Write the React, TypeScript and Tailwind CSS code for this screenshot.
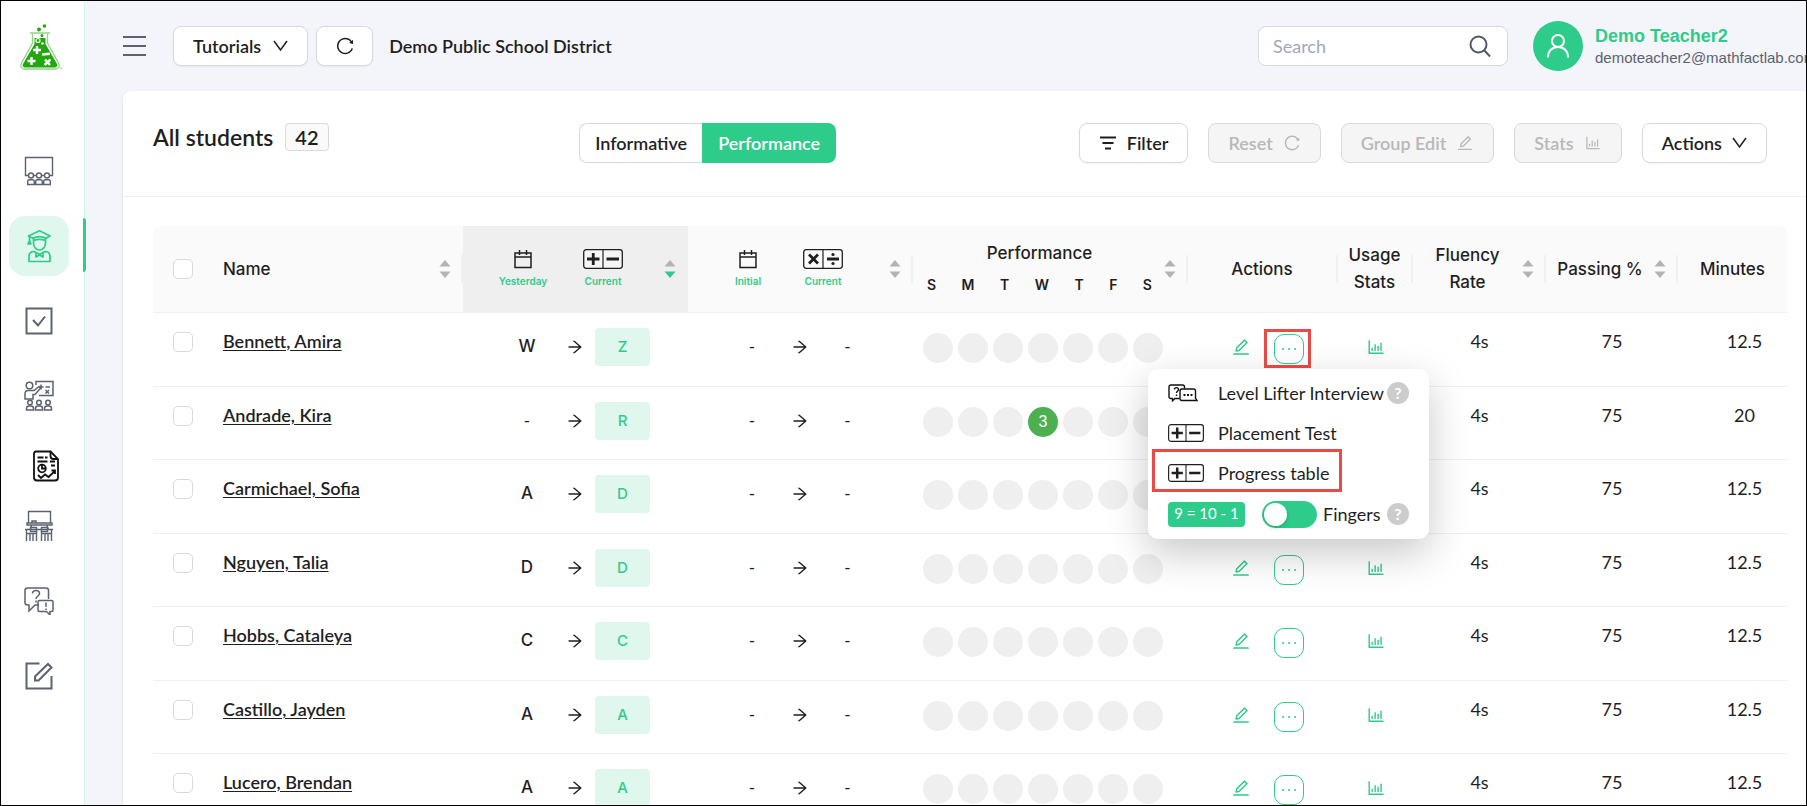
import React from 'react'
import { AiOutlineArrowRight, AiOutlineBarChart, AiOutlineEdit, AiOutlineReload } from 'react-icons/ai'

type Student = {
  name: string
  yesterday: string
  current: string
  minutes: string
  played?: { day: number; count: number }
  menuOpen?: boolean
}

const students: Student[] = [
  { name: 'Bennett, Amira', yesterday: 'W', current: 'Z', minutes: '12.5', menuOpen: true },
  { name: 'Andrade, Kira', yesterday: '-', current: 'R', minutes: '20', played: { day: 3, count: 3 } },
  { name: 'Carmichael, Sofia', yesterday: 'A', current: 'D', minutes: '12.5' },
  { name: 'Nguyen, Talia', yesterday: 'D', current: 'D', minutes: '12.5' },
  { name: 'Hobbs, Cataleya', yesterday: 'C', current: 'C', minutes: '12.5' },
  { name: 'Castillo, Jayden', yesterday: 'A', current: 'A', minutes: '12.5' },
  { name: 'Lucero, Brendan', yesterday: 'A', current: 'A', minutes: '12.5' },
]

const days = ['S', 'M', 'T', 'W', 'T', 'F', 'S']

/* ---------- Icons ---------- */

const Logo = () => (
  <svg width="42" height="48" viewBox="0 0 42 48" fill="none">
    <circle cx="24.500" cy="3" r="1.800" fill="#22a80c" />
    <circle cx="19" cy="6.500" r="2" fill="#22a80c" />
    <path d="M10 10h20M12.500 11v9L1.500 40c-1.500 3.500 0 6 3 6h31c3 0 4.500-2.500 3-6l-11-20v-9" stroke="#8fd487" strokeWidth="1.300" />
    <path d="M14.500 15h11v6l11.500 20c1 2-.5 3.500-2.500 3.500h-29C3.500 44.500 2 43 3 41l11.500-20z" fill="#22a80c" />
    <circle cx="18" cy="17.500" r="2" stroke="#fff" strokeWidth="1.200" />
    <circle cx="22" cy="12.500" r="1.500" fill="#22a80c" />
    <circle cx="22.500" cy="20.500" r="1.200" fill="#fff" />
    <path d="M17 23v8M13 27h8M22 31.500l8-.8M11.500 34v8M7.500 38h8M25 36.500l5 5.500M30.500 36.500L24.500 42" stroke="#fff" strokeWidth="2.400" />
    <circle cx="41" cy="45" r="1" stroke="#8fd487" strokeWidth=".6" />
  </svg>
)

const ClassIcon = () => (
  <svg width="30" height="30" viewBox="0 0 30 30" fill="none" stroke="currentColor" strokeWidth="1.400">
    <path d="M5 19.500H1.500V1.500h27v18H25" />
    {[7, 15, 23].map((x) => (
      <g key={x}>
        <circle cx={x} cy="19.500" r="2.500" />
        <path d={`M${x - 3.3} 28.500v-3q0-1.800 1.800-1.800h3q1.800 0 1.800 1.800v3z`} />
      </g>
    ))}
    <path d="M10 19.500h2M18 19.500h2" />
  </svg>
)

const StudentIcon = () => (
  <svg width="26" height="34" viewBox="0 0 26 34" fill="none" stroke="currentColor" strokeWidth="1.700" strokeLinejoin="round">
    <path d="M2.500 7L13.500 1.800 24 7l-4 2.200c-4-2-9-2-13 0z" />
    <path d="M7.500 9v5c0 4.500 3 7 6 7s6-2.500 6-7V9M7.500 11.500c4-1.500 8-1.500 12 0M3.500 7.500v4M2 15l1.500-3.500L5 15z" />
    <path d="M3 32.500v-5c0-3 2-5 5-5l5.500 3 5.500-3c3 0 5 2 5 5v5z" />
    <path d="M10 24v4l3.500-2 3.500 2v-4" />
  </svg>
)

const CheckSquareIcon = () => (
  <svg width="28" height="28" viewBox="0 0 28 28" fill="none" stroke="currentColor" strokeWidth="2">
    <rect x="1.500" y="1.500" width="25" height="25" />
    <path d="M8 13l5 5.500 7-9" />
  </svg>
)

const TeachIcon = () => (
  <svg width="30" height="31" viewBox="0 0 30 31" fill="none" stroke="currentColor" strokeWidth="1.500">
    <path d="M12 5V1.500h17v14H15" />
    <circle cx="5.500" cy="5.500" r="3.300" />
    <path d="M1 19v-5c0-2 1-3.500 3-3.500h6l5-4 1.500 1.800L11 14.500H9V19zM17 4.500v5M14.500 7h5M21.500 7h4.500M21.500 10l3.500 3.500M25 10l-3.500 3.500" />
    {[6, 15, 24].map((x) => (
      <g key={x}>
        <circle cx={x} cy="22.500" r="2.300" />
        <path d={`M${x - 3.5} 30v-1.500q0-2.500 2.500-2.500h2q2.500 0 2.500 2.500V30z`} />
      </g>
    ))}
  </svg>
)

const ReportIcon = () => (
  <svg width="28" height="32" viewBox="0 0 28 32" fill="none" stroke="#111" strokeWidth="1.800">
    <path d="M4 1.500h14.500L26 9v18.500q0 3-3 3H5q-3 0-3-3V4q0-2.500 2-2.500z" />
    <path d="M18.500 1.500V6q0 3 3 3H26" />
    <path d="M5.500 7.500h6M13 7.500h2.500M5.500 11.500h10M18 11.500h5M19 15.500h4" />
    <circle cx="10" cy="18.500" r="3.800" />
    <path d="M10 14.500v4h4M6 25l3 3 4-3.500 3.500 2.500 6.500-6M19.500 20.500H23V24" />
  </svg>
)

const ClassroomIcon = () => (
  <svg width="30" height="31" viewBox="0 0 30 31" fill="none" stroke="currentColor" strokeWidth="1.400">
    <path d="M4.500 13V1.500h22V13M3 13h25v2H3zM8 12.500v-1.500h4v1.500M7.500 15.500L6 20M23 15.500l1.500 4.500" />
    <path d="M1 19.500h28M2.500 19.500V31M12.500 21v10M17.500 21v10M27.500 19.500V31M6 24v7M9 24v7M21 24v7M24 24v7M3 23.500h9M18 23.500h9" />
    <path d="M6.500 17.500h6v4h-6zM17.500 17.500h6v4h-6z" />
  </svg>
)

const HelpChatIcon = () => (
  <svg width="30" height="28" viewBox="0 0 30 28" fill="none" stroke="currentColor" strokeWidth="1.500">
    <path d="M15 18h-4l-6 6v-6H3.500Q1 18 1 15.500v-12Q1 1 3.500 1H22q2.500 0 2.500 2.500V12" />
    <path d="M15.500 13.500h12q1.500 0 1.500 1.500v8q0 1.500-1.500 1.500h-1.500V28l-3.500-3.500h-7q-1.500 0-1.500-1.500v-8q0-1.500 1.500-1.500z" />
    <path d="M8.500 6.500c0-4 7-4 7 0 0 2.500-3.500 2.500-3.500 5.500M12 13.500v2M22 15.500v4.500M22 21.500v1.500" />
  </svg>
)

const ComposeIcon = () => (
  <svg width="28" height="28" viewBox="0 0 28 28" fill="none" stroke="currentColor" strokeWidth="2">
    <path d="M14.500 1.500h-13v25h25V14" />
    <path d="M10 18.500v-4L23 2l3.500 3.500-13 13z" />
  </svg>
)

const ChevronIcon = () => (
  <svg width="15" height="12" viewBox="0 0 15 12" fill="none" stroke="currentColor" strokeWidth="1.500">
    <path d="M1 1l6.500 9L14 1" />
  </svg>
)

const CalendarIcon = () => (
  <svg width="18" height="20" viewBox="0 0 18 20" fill="none" stroke="currentColor" strokeWidth="1.500">
    <path d="M1 4h16v14.500H1zM1 8h16M5.500 1v5M12.500 1v5" />
  </svg>
)

const CardIcon = ({ kind, small }: { kind: 'add' | 'multiply'; small?: boolean }) => (
  <svg width={small ? 36 : 40} height={small ? 18 : 20} viewBox="0 0 40 20" fill="none" stroke="#1f1f1f">
    <rect x="0.700" y="0.700" width="38.600" height="18.600" rx="2.500" strokeWidth="1.300" fill="#fff" fillOpacity=".4" />
    <path d="M20 1v18" strokeWidth="1.200" />
    {kind === 'add' ? (
      <path d="M4 10h12.500M10.250 4v12M23.500 10H36" strokeWidth="2.800" />
    ) : (
      <>
        <path d="M6 5.500l9 9M15 5.500l-9 9M24 10h12" strokeWidth="2.800" />
        <circle cx="30" cy="5.500" r="1.600" fill="#1f1f1f" stroke="none" />
        <circle cx="30" cy="14.500" r="1.600" fill="#1f1f1f" stroke="none" />
      </>
    )}
  </svg>
)

const InterviewIcon = () => (
  <svg width="30" height="18" viewBox="0 0 30 18" fill="none" stroke="#111" strokeWidth="1.400">
    <path d="M11.500 14.500H7L4.500 16.800V14.500H3q-2 0-2-2V3q0-2 2-2h11.500q2 0 2 2v1.500" />
    <path d="M14 5h11.500q2 0 2 2v7l1.500 2.500H14q-2 0-2-2V7q0-2 2-2z" />
    <path d="M6.500 5.500c0-2.500 4-2.500 4 0 0 1.500-2 1.500-2 3.500M8.500 10.500v1.500" />
    <path d="M15.500 11h2M19 11h2M22.500 11h2" strokeWidth="2" />
  </svg>
)

/* ---------- Small parts ---------- */

const Sorter = ({ active }: { active?: boolean }) => (
  <svg className="mr-2.5 shrink-0" width="12" height="18" viewBox="0 0 12 18" fill="#b3b3b3">
    <path d="M6 0l5.500 6.500H.5z" />
    <path d="M6 18L.5 11.500h11z" fill={active ? '#2ecc8a' : '#b3b3b3'} />
  </svg>
)

const Th = ({ children, sort, active, last, className = '' }: {
  children?: React.ReactNode
  sort?: boolean
  active?: boolean
  last?: boolean
  className?: string
}) => (
  <th className={`h-[87px] border-b border-[#f0f0f0] p-0 font-medium ${className}`}>
    <div className="flex items-center">
      <div className="flex-1">{children}</div>
      {sort && <Sorter active={active} />}
      {!last && <span className={`h-7 w-0.5 ${active ? '' : 'bg-[#f0f0f0]'}`} />}
    </div>
  </th>
)

const LevelHead = ({ from, kind }: { from: string; kind: 'add' | 'multiply' }) => (
  <div className="flex pl-5 text-[10px] leading-4 font-semibold text-[#2ecc8a]">
    <div className="flex w-20 flex-col items-center gap-1">
      <span className="text-[#1f1f1f]"><CalendarIcon /></span>
      {from}
    </div>
    <div className={`flex flex-col items-center gap-1 ${kind === 'add' ? 'w-20' : 'w-[70px]'}`}>
      <CardIcon kind={kind} />
      Current
    </div>
  </div>
)

const LevelCell = ({ from, children }: { from: string; children: React.ReactNode }) => (
  <div className="flex h-[38px] items-center pl-[34px] font-['Inter',sans-serif]">
    <span className={`w-[60px] text-center text-[17px] ${from === '-' ? "font-['Lato',sans-serif]" : 'font-medium'}`}>{from}</span>
    <AiOutlineArrowRight className="mr-[11px] ml-[9px] size-[18px]" />
    {children}
  </div>
)

const helpDot = 'flex size-[22px] items-center justify-center rounded-full bg-[#ccc] text-base font-bold text-white'
const tick = 'block size-5 appearance-none rounded-[5px] border border-[#d9d9d9] bg-white'
const toolButton = 'flex h-10 items-center gap-2.5 rounded-lg border border-[#d9d9d9] px-[19px] text-lg font-semibold'

const ActionMenu = () => (
  <div className="absolute top-[35px] -left-[126px] z-10 flex h-[170px] w-[281px] flex-col rounded-[10px] bg-white px-5 pt-1 text-lg shadow-[0_14px_40px_rgba(0,0,0,0.22)]">
    <button className="flex h-10 items-center text-left">
      <span className="w-[50px]"><InterviewIcon /></span>
      <span className="flex-1 whitespace-nowrap">Level Lifter Interview</span>
      <span className={helpDot}>?</span>
    </button>
    <button className="flex h-10 items-center text-left">
      <span className="w-[50px]"><CardIcon kind="add" small /></span>
      Placement Test
    </button>
    <button className="relative flex h-10 items-center text-left">
      <span className="w-[50px]"><CardIcon kind="add" small /></span>
      Progress table
      <span className="absolute -top-1 -left-4 h-[43px] w-[190px] border-3 border-[#e94b46]" />
    </button>
    <div className="flex h-[42px] items-center">
      <span className="flex h-[25px] w-[77px] items-center justify-center rounded bg-[#2ecc8a] text-[15px] text-white">9 = 10 - 1</span>
      <label className="flex flex-1 items-center gap-1.5 pl-[17px]">
        <input
          type="checkbox"
          role="switch"
          className="h-[27px] w-[55px] appearance-none rounded-full bg-[#2ecc8a] p-0.5 before:block before:size-[23px] before:rounded-full before:bg-white before:shadow-[0_2px_4px_rgba(0,35,11,0.2)]"
        />
        Fingers
      </label>
      <button aria-label="Help" className={helpDot}>?</button>
    </div>
  </div>
)

const StudentRow = ({ student, index }: { student: Student; index: number }) => (
  <tr className="odd:h-[74px] even:h-[73px] *:border-b *:border-[#f0f0f0] *:p-0 *:align-top">
    <td>
      <div className="pt-[19px] pl-5">
        <input type="checkbox" aria-label={student.name} className={tick} />
      </div>
    </td>
    <td>
      <div className="pt-4 pl-2.5 text-lg leading-6 font-semibold">
        <a href={`#student-${index}`} className="underline underline-offset-2">{student.name}</a>
      </div>
    </td>
    <td>
      <div className="pt-[15px]">
        <LevelCell from={student.yesterday}>
          <span className="flex h-[38px] w-[55px] items-center justify-center rounded bg-[#dff7ec] text-[15px] font-medium text-[#2ecc8a]">
            {student.current}
          </span>
        </LevelCell>
      </div>
    </td>
    <td>
      <div className="pt-[15px]">
        <LevelCell from="-">
          <span className="w-[55px] text-center font-['Lato',sans-serif] text-[17px]">-</span>
        </LevelCell>
      </div>
    </td>
    <td>
      <div className="flex gap-[5px] pt-5 pl-2.5">
        {days.map((_, day) =>
          student.played?.day === day ? (
            <span key={day} className="flex size-[30px] items-center justify-center rounded-full bg-[#4caf50] font-['Liberation_Sans',sans-serif] text-base text-white">
              {student.played.count}
            </span>
          ) : (
            <span key={day} className="size-[30px] rounded-full bg-[#efefef]" />
          ),
        )}
      </div>
    </td>
    <td>
      <div className="flex items-center gap-[23px] pt-[21px] pl-[43px] text-[#2ecc8a]">
        <button aria-label="Edit" className="pb-1"><AiOutlineEdit className="size-5" /></button>
        <div className="relative">
          <button aria-label="More actions" className="flex size-[30px] items-center justify-center gap-1 rounded-[10px] border border-[#2ecc8a]">
            <span className="size-0.5 rounded-full bg-[#2ecc8a]" />
            <span className="size-0.5 rounded-full bg-[#2ecc8a]" />
            <span className="size-0.5 rounded-full bg-[#2ecc8a]" />
          </button>
          {student.menuOpen && (
            <div className="text-[#1f1f1f]">
              <span className="absolute -top-[5px] -right-[7px] -bottom-1 -left-2.5 border-3 border-[#e94b46]" />
              <ActionMenu />
            </div>
          )}
        </div>
      </div>
    </td>
    <td>
      <div className="flex justify-center pt-6 text-[#2ecc8a]">
        <button aria-label="Usage stats"><AiOutlineBarChart className="size-5" /></button>
      </div>
    </td>
    <td><div className="pt-4 text-center text-lg leading-6">4s</div></td>
    <td><div className="pt-4 text-center text-lg leading-6">75</div></td>
    <td><div className="pt-4 pl-6 text-center text-lg leading-6">{student.minutes}</div></td>
  </tr>
)

const Sidebar = () => {
  const item = 'flex h-[75px] w-[60px] items-center justify-center'
  return (
    <aside className="w-[84px] shrink-0 border-r border-[#d5f5e8] bg-white text-[#5b6270]">
      <div className="flex h-[132px] justify-center pt-[22px] pr-1">
        <Logo />
      </div>
      <nav className="flex flex-col pl-2">
        <a href="#classes" aria-label="Classes" className={item}><ClassIcon /></a>
        <a href="#students" aria-label="Students" className="relative flex h-[75px] w-[60px] items-center text-[#2ecc8a]">
          <span className="flex size-[60px] items-center justify-center rounded-2xl bg-[#dff7ec]"><StudentIcon /></span>
          <span className="absolute top-2.5 -right-[17px] h-[54px] w-[3px] rounded-r bg-[#2ecc8a]" />
        </a>
        <a href="#assignments" aria-label="Assignments" className={item}><CheckSquareIcon /></a>
        <a href="#teaching" aria-label="Teaching" className={item}><TeachIcon /></a>
        <a href="#reports" aria-label="Reports" className="flex h-[55px] w-[60px] items-center justify-center pt-2.5 pl-3.5"><ReportIcon /></a>
        <a href="#classroom" aria-label="Classroom" className={item}><ClassroomIcon /></a>
        <a href="#help" aria-label="Help" className={item}><HelpChatIcon /></a>
        <a href="#notes" aria-label="Notes" className={item}><ComposeIcon /></a>
      </nav>
    </aside>
  )
}

const TopBar = () => (
  <header className="flex h-[90px] shrink-0 items-center text-lg">
    <button aria-label="Menu" className="flex w-[23px] flex-col gap-[7px]">
      <span className="h-0.5 bg-[#5b6270]" />
      <span className="h-0.5 bg-[#5b6270]" />
      <span className="h-0.5 bg-[#5b6270]" />
    </button>
    <button className="ml-[27px] flex h-10 items-center gap-3 rounded-lg border border-[#d9d9d9] bg-white px-[19px] font-semibold shadow-xs">
      Tutorials <ChevronIcon />
    </button>
    <button aria-label="Reload" className="ml-2 flex h-10 w-[57px] items-center justify-center rounded-lg border border-[#d9d9d9] bg-white shadow-xs">
      <AiOutlineReload className="size-5" />
    </button>
    <span className="ml-4 font-semibold">Demo Public School District</span>

    <label className="mr-[25px] ml-auto flex h-10 w-[250px] items-center rounded-lg border border-[#d9d9d9] bg-white pr-4 pl-3.5">
      <input type="text" placeholder="Search" aria-label="Search" className="min-w-0 flex-1 outline-none placeholder:text-[#a0a8b8]" />
      <svg width="22" height="22" viewBox="0 0 22 22" fill="none" stroke="#4f5868" strokeWidth="2">
        <circle cx="9.500" cy="9.500" r="8" />
        <path d="M15 15l6 6.500" />
      </svg>
    </label>
    <div className="flex size-[50px] shrink-0 items-center justify-center rounded-full bg-[#2ecc8a]">
      <svg width="22" height="24" viewBox="0 0 22 24" fill="none" stroke="#fff" strokeWidth="2">
        <circle cx="11" cy="7" r="6" />
        <path d="M1 23.500c0-6.500 4-10.500 10-10.500s10 4 10 10.500" />
      </svg>
    </div>
    <div className="ml-3 w-[211px] overflow-hidden font-['Liberation_Sans',Arial,sans-serif] whitespace-nowrap">
      <p className="text-lg leading-6 font-bold text-[#2ecc8a]">Demo Teacher2</p>
      <p className="text-[15px] leading-5 text-[#5b6270]">demoteacher2@mathfactlab.com</p>
    </div>
  </header>
)

const App = () => {
  return (
    <div className="flex h-screen overflow-hidden border border-black bg-[#f4f5fa] font-['Lato',sans-serif] text-[#1f1f1f]">
      <Sidebar />
      <main className="flex min-w-0 flex-1 flex-col pl-[38px]">
        <TopBar />

        <section className="flex-1 rounded-tl-lg bg-white shadow-sm">
          {/* Card header */}
          <div className="flex h-[106px] items-start justify-between border-b border-[#f0f0f0] pt-8 pr-[39px] pl-[30px]">
            <div className="flex h-7 items-center gap-3">
              <h1 className="text-[23px] font-semibold">All students</h1>
              <span className="flex h-7 items-center rounded border border-[#d9d9d9] bg-[#fafafa] px-[9px] text-xl font-semibold">42</span>
            </div>
            <div className="ml-2 flex h-10 text-lg font-semibold">
              <button className="rounded-l-lg border border-r-0 border-[#d9d9d9] px-[15px]">Informative</button>
              <button className="rounded-r-lg bg-[#2ecc8a] px-4 text-white">Performance</button>
            </div>
            <div className="flex gap-5">
              <button className={`${toolButton} shadow-xs`}>
                <svg width="18" height="14" viewBox="0 0 18 14" stroke="currentColor" strokeWidth="1.800">
                  <path d="M1 1.500h16M3.500 7h11M6 12.500h6" />
                </svg>
                Filter
              </button>
              <button disabled className={`${toolButton} bg-[#f5f5f5] text-[#b8b8b8]`}>
                Reset <AiOutlineReload className="size-[18px]" />
              </button>
              <button disabled className={`${toolButton} bg-[#f5f5f5] text-[#b8b8b8]`}>
                Group Edit <AiOutlineEdit className="size-[18px]" />
              </button>
              <button disabled className={`${toolButton} bg-[#f5f5f5] text-[#b8b8b8]`}>
                Stats <AiOutlineBarChart className="size-[18px]" />
              </button>
              <button className={`${toolButton} shadow-xs`}>
                Actions <ChevronIcon />
              </button>
            </div>
          </div>

          {/* Students table */}
          <div className="pt-[29px] pr-[19px] pl-[30px]">
            <table className="w-full table-fixed border-separate border-spacing-0">
              <colgroup>
                <col className="w-[60px]" />
                <col />
                <col className="w-[225px]" />
                <col className="w-[225px]" />
                <col className="w-[275px]" />
                <col className="w-[150px]" />
                <col className="w-[75px]" />
                <col className="w-[133px]" />
                <col className="w-[132px]" />
                <col className="w-[109px]" />
              </colgroup>
              <thead className="bg-[#fafafa] font-['Inter',sans-serif] text-[17px] leading-[27px]">
                <tr>
                  <Th last className="rounded-tl-lg">
                    <div className="pl-5">
                      <input type="checkbox" aria-label="Select all" className={tick} />
                    </div>
                  </Th>
                  <Th sort><div className="pl-2.5 text-left">Name</div></Th>
                  <Th sort active className="bg-[#efefef]"><LevelHead from="Yesterday" kind="add" /></Th>
                  <Th sort><LevelHead from="Initial" kind="multiply" /></Th>
                  <Th sort>
                    <div className="pr-3 pl-3.5">
                      Performance
                      <div className="flex justify-between pt-1 text-sm leading-[27px] font-semibold">
                        {days.map((day, i) => <span key={i}>{day}</span>)}
                      </div>
                    </div>
                  </Th>
                  <Th>Actions</Th>
                  <Th>Usage Stats</Th>
                  <Th sort>Fluency<br />Rate</Th>
                  <Th sort>Passing %</Th>
                  <Th last className="rounded-tr-lg">Minutes</Th>
                </tr>
              </thead>
              <tbody>
                {students.map((student, i) => (
                  <StudentRow key={student.name} student={student} index={i} />
                ))}
              </tbody>
            </table>
          </div>
        </section>
      </main>
    </div>
  )
}

export default App
